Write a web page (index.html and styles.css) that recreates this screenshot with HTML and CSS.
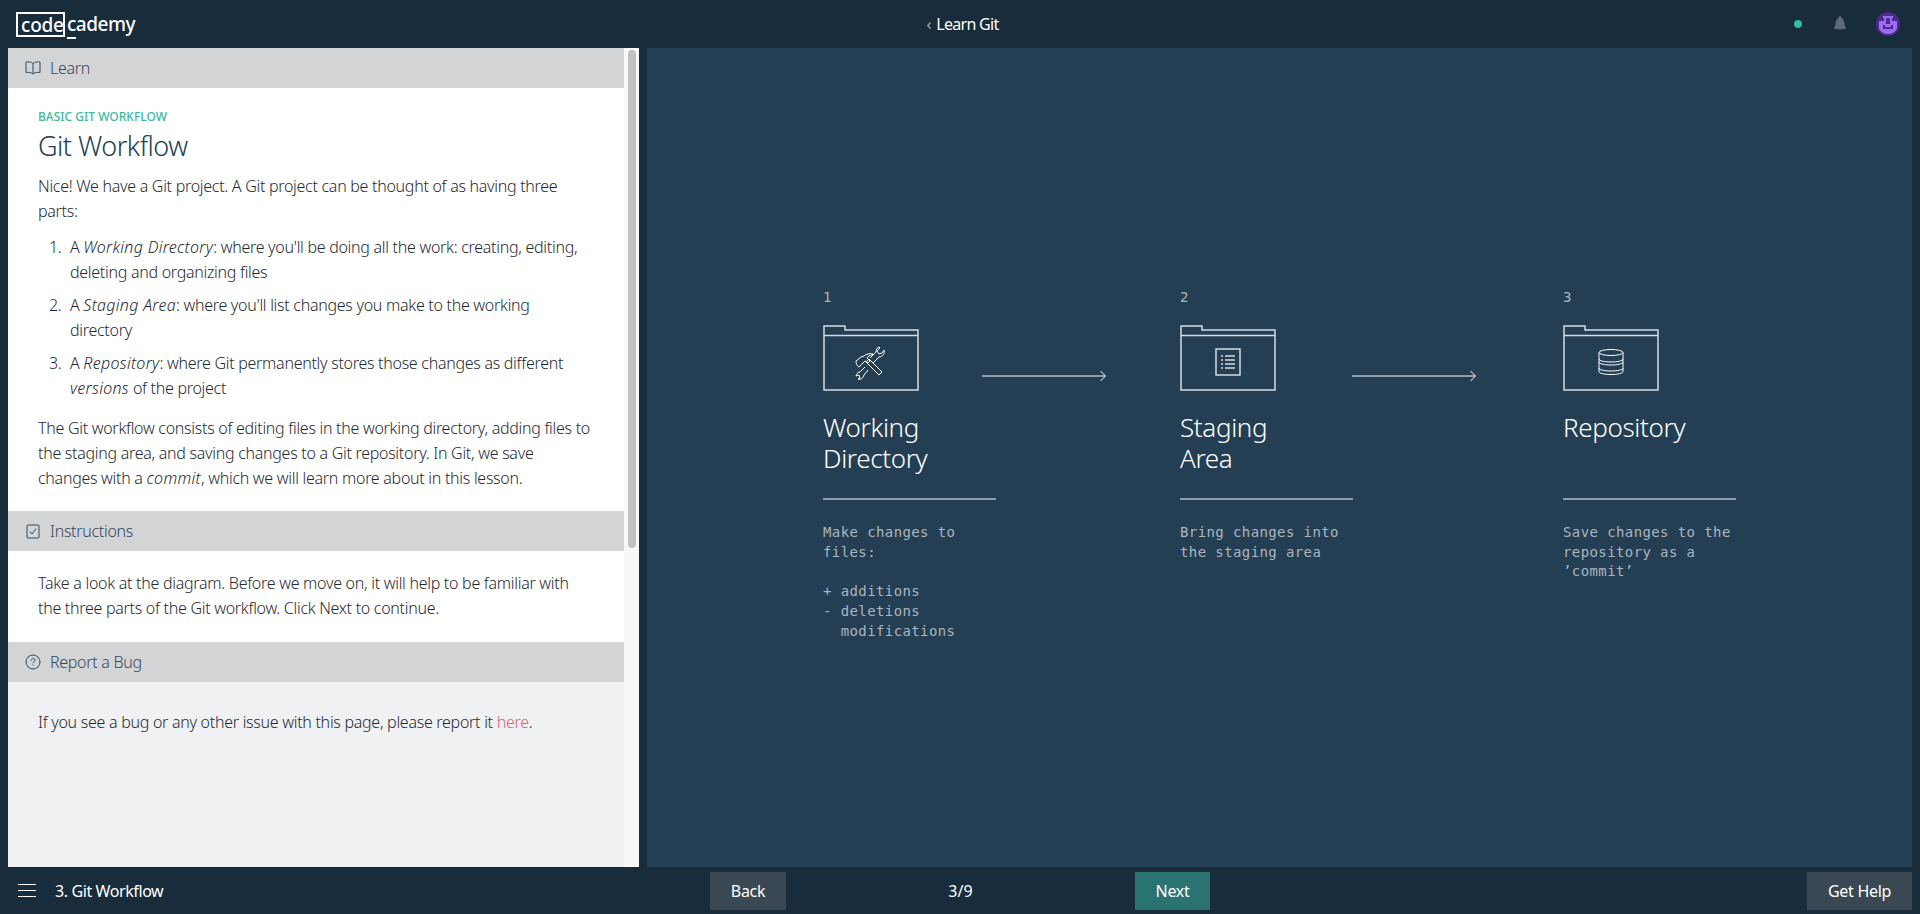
FILE: index.html
```html
<!DOCTYPE html>
<html>
<head>
  <title>Learn Git - Git Workflow</title>
  <link rel="stylesheet" href="styles.css">
</head>
<body>
  <header class="topbar">
    <div class="logo"><span class="logo-box">code</span><span class="logo-rest"><span class="logo-c">c</span>ademy</span></div>
    <div class="course-title"><span class="chevron">&#8249;</span> Learn Git</div>
    <div class="top-icons">
      <span class="status-dot"></span>
      <svg class="bell" width="20" height="20" viewBox="0 0 20 20">
        <path d="M10 2c-1 0-1.500 1-1.800 2.300C6.500 5 5.800 7 5.500 10c-.2 2-1 3.500-2 4.500 1.500 1.300 4 2 6.500 2s5-.7 6.500-2c-1-1-1.800-2.500-2-4.500-.3-3-1-5-2.700-5.700C11.500 3 11 2 10 2z" fill="#5b6b78"/>
        <path d="M4 14.800c2 1.200 10 1.200 12 0M8.500 17.200c1 .6 2 .6 3 0" fill="none" stroke="#182c3b" stroke-width="1"/>
      </svg>
      <svg class="avatar" width="24" height="24" viewBox="0 0 24 24">
        <circle cx="12" cy="12" r="12" fill="#4b2a8c"/>
        <path d="M3 9h5V6h-1V4h10v2h-1v3h5v8c-2 3-5 5-9 5s-7-2-9-5z" fill="#9a6bf0"/>
        <path d="M10 6h4v6h-4zM7 13h2v2h6v-2h2v4H7z" fill="#4b2a8c"/>
      </svg>
    </div>
  </header>

  <main class="workspace">
    <section class="lesson">
      <div class="lesson-body">
        <div class="section-head">
          <svg width="18" height="16" viewBox="0 0 18 16" fill="none" stroke="#33485a" stroke-width="1">
            <path d="M9 3.500C7.500 2 4 1.500 2 2v10.500c2-.5 5.500 0 7 1.500 1.500-1.500 5-2 7-1.500V2c-2-.5-5.500 0-7 1.500zM9 3.500V14"/>
          </svg>
          Learn
        </div>
        <div class="section-text learn-text">
          <div class="kicker">BASIC GIT WORKFLOW</div>
          <h1>Git Workflow</h1>
          <p>Nice! We have a Git project. A Git project can be thought of as having three parts:</p>
          <ol>
            <li>A <em>Working Directory</em>: where you'll be doing all the work: creating, editing, deleting and organizing files</li>
            <li>A <em>Staging Area</em>: where you'll list changes you make to the working directory</li>
            <li>A <em>Repository</em>: where Git permanently stores those changes as different <em>versions</em> of the project</li>
          </ol>
          <p>The Git workflow consists of editing files in the working directory, adding files to the staging area, and saving changes to a Git repository. In Git, we save changes with a <em>commit</em>, which we will learn more about in this lesson.</p>
        </div>
        <div class="section-head">
          <svg width="18" height="16" viewBox="0 0 18 16" fill="none" stroke="#33485a" stroke-width="1">
            <rect x="3" y="2" width="12" height="13" rx="1"/>
            <path d="M6 8.500l2 2.500 4-5.500"/>
          </svg>
          Instructions
        </div>
        <div class="section-text instructions-text">
          <p>Take a look at the diagram. Before we move on, it will help to be familiar with the three parts of the Git workflow. Click Next to continue.</p>
        </div>
        <div class="section-head">
          <svg width="18" height="16" viewBox="0 0 18 16" fill="none" stroke="#33485a" stroke-width="1">
            <circle cx="9" cy="8" r="7"/>
            <path d="M7.200 6.500c0-2.500 3.800-2.500 3.800-.3 0 1.500-2 1.500-2 3M9 10.500v1"/>
          </svg>
          Report a Bug
        </div>
        <div class="section-text bug-text">
          <p>If you see a bug or any other issue with this page, please report it <a href="#">here</a>.</p>
        </div>
      </div>
      <div class="scroll-track"><div class="scroll-thumb"></div></div>
    </section>

    <section class="diagram">
      <div class="steps">
        <div class="step">
          <div class="step-num">1</div>
          <svg class="folder" width="96" height="66" viewBox="0 0 96 66" fill="none">
            <path class="folder-line" d="M1 1h21v4h73v60H1zM1 10.500h94"/>
            <g stroke="#fff" stroke-width="1" stroke-linejoin="round">
              <path d="M33 36l5-4 3-1c2-2 6-3 9-2l-1 1c-2 0-4 1-5 3l3 3-2 2-3-2-6 6c-1 0-3-3-3-6z"/>
              <path d="M43 37l13 13 3-3-13-13zM47 33l6-6c0-2 1-5 3-5l1 1-3 3 2 3 3-1 2-3c1 3-1 7-5 7l-6 6M42 42l-5 5c-3 0-3 2-4 4l3-1 1 3-2 1c3 1 5-1 6-4l4-5"/>
            </g>
          </svg>
          <h2>Working<br>Directory</h2>
          <pre class="step-note">Make changes to
files:

+ additions
- deletions
  modifications</pre>
          <svg class="arrow" width="125" height="12" viewBox="0 0 125 12" fill="none" stroke="#fff" stroke-width="1"><path d="M0 6h123M118.500 1l5 5-5 5"/></svg>
        </div>
        <div class="step">
          <div class="step-num">2</div>
          <svg class="folder" width="96" height="66" viewBox="0 0 96 66" fill="none">
            <path class="folder-line" d="M1 1h21v4h73v60H1zM1 10.500h94"/>
            <rect x="36" y="24" width="24" height="26" stroke="#d5dbe0" stroke-width="1.500"/>
            <path d="M41 31h2M45 31h10M41 35h2M45 35h10M41 39h2M45 39h10M41 43h2M45 43h10" stroke="#d5dbe0" stroke-width="1.500"/>
          </svg>
          <h2>Staging<br>Area</h2>
          <pre class="step-note">Bring changes into
the staging area</pre>
          <svg class="arrow arrow-second" width="125" height="12" viewBox="0 0 125 12" fill="none" stroke="#fff" stroke-width="1"><path d="M0 6h123M118.500 1l5 5-5 5"/></svg>
        </div>
        <div class="step">
          <div class="step-num">3</div>
          <svg class="folder" width="96" height="66" viewBox="0 0 96 66" fill="none">
            <path class="folder-line" d="M1 1h21v4h73v60H1zM1 10.500h94"/>
            <g stroke="#fff" stroke-width="1">
              <ellipse cx="48" cy="27.500" rx="12" ry="3"/>
              <path d="M36 27.500v19c0 4 24 4 24 0v-19M36 34c0 4 24 4 24 0M36 37c0 4 24 4 24 0M36 43c0 4 24 4 24 0"/>
            </g>
          </svg>
          <h2>Repository<br>&nbsp;</h2>
          <pre class="step-note">Save changes to the
repository as a
&#8217;commit&#8217;</pre>
        </div>
      </div>
    </section>
  </main>

  <footer class="bottombar">
    <div class="lesson-name">
      <div class="burger"><span></span><span></span><span></span></div>
      3. Git Workflow
    </div>
    <div class="pager">
      <button class="btn btn-back">Back</button>
      <span class="count">3/9</span>
      <button class="btn btn-next">Next</button>
    </div>
    <button class="btn btn-help">Get Help</button>
  </footer>
</body>
</html>
```

FILE: styles.css
```css
html, body {
  height: 100%;
}

body {
  margin: 0;
  height: 914px;
  overflow: hidden;
  display: flex;
  flex-direction: column;
  background-color: #182c3b;
  font-family: "Noto Sans", sans-serif;
  font-weight: 300;
  font-size: 16px;
  color: #1f2a33;
}

/* Top bar */
.topbar {
  height: 48px;
  flex: none;
  display: grid;
  grid-template-columns: 1fr auto 1fr;
  align-items: center;
  color: #ffffff;
}

.logo {
  display: flex;
  align-items: center;
  padding-left: 16px;
  font-size: 19px;
  font-weight: 500;
}

.logo-box {
  border: 2px solid #ffffff;
  height: 25px;
  line-height: 22px;
  padding: 0 3px;
  box-sizing: border-box;
  width: 49px;
  letter-spacing: -0.2px;
}

.logo-rest {
  margin-left: 2px;
  letter-spacing: -0.5px;
}

.logo-c {
  border-bottom: 2px solid #ffffff;
}

.course-title {
  padding-left: 5px;
  font-size: 16px;
  font-weight: 400;
  letter-spacing: -0.7px;
}

.chevron {
  color: #aab4bc;
  margin-right: 2px;
}

.top-icons {
  display: flex;
  justify-content: flex-end;
  align-items: center;
  padding-right: 20px;
}

.status-dot {
  width: 8px;
  height: 8px;
  border-radius: 50%;
  background-color: #2fbd9b;
}

.bell {
  margin-left: 28px;
}

.avatar {
  margin-left: 26px;
}

/* Main area */
.workspace {
  flex: 1;
  min-height: 0;
  display: flex;
  padding: 0 8px;
  gap: 8px;
}

.lesson {
  width: 631px;
  flex: none;
  display: flex;
  background-color: #f0f1f3;
}

.lesson-body {
  flex: 1;
  min-width: 0;
}

.section-head {
  height: 40px;
  display: flex;
  align-items: center;
  gap: 8px;
  padding: 0 16px;
  background-color: #d3d4d6;
  color: #33485a;
  font-size: 16px;
  letter-spacing: -0.3px;
}

.section-text {
  padding: 0 30px;
  line-height: 25px;
  letter-spacing: -0.28px;
}

.section-text p {
  margin: 0;
}

.section-text em {
  letter-spacing: 0.3px;
}

.learn-text {
  background-color: #ffffff;
  padding-top: 21px;
  padding-bottom: 20px;
}

.instructions-text {
  background-color: #ffffff;
  padding-top: 20px;
  padding-bottom: 20px;
  height: 91px;
  box-sizing: border-box;
}

.bug-text {
  padding-top: 28px;
}

.bug-text a {
  color: #e85d6f;
  text-decoration: none;
}

.kicker {
  font-size: 12px;
  font-weight: 500;
  line-height: 16px;
  letter-spacing: 0;
  color: #3fb8a0;
}

h1 {
  margin: 2px 0 9px;
  font-size: 27px;
  font-weight: 300;
  line-height: 38px;
  letter-spacing: -0.5px;
  color: #204056;
}

ol {
  margin: 11px 0 15px;
  padding-left: 32px;
  list-style: none;
  counter-reset: step;
}

li {
  margin-bottom: 8px;
  counter-increment: step;
}

li::before {
  content: counter(step) ".";
  display: inline-block;
  width: 21px;
  margin-left: -21px;
}

.scroll-track {
  width: 15px;
  flex: none;
  background-color: #f8f8f8;
  padding: 2px 3px 0 4px;
  box-sizing: border-box;
}

.scroll-thumb {
  height: 498px;
  background-color: #c1c1c1;
  border-radius: 4px;
}

/* Diagram */
.diagram {
  flex: 1;
  min-width: 0;
  background-color: #243f54;
  padding: 241px 0 0 176px;
  box-sizing: border-box;
}

.steps {
  display: grid;
  grid-template-columns: 357px 383px 173px;
}

.step {
  position: relative;
  width: 173px;
}

.step-num {
  font-family: "DejaVu Sans Mono", monospace;
  font-size: 14px;
  line-height: 16px;
  color: #a9b5be;
}

.folder {
  display: block;
  margin-top: 20px;
}

.folder-line {
  stroke: #d5dbe0;
  stroke-width: 1.500;
}

h2 {
  margin: 21px 0 0;
  padding-bottom: 24px;
  border-bottom: 2px solid #8f9daa;
  font-size: 26px;
  font-weight: 300;
  line-height: 31px;
  letter-spacing: -0.35px;
  color: #ffffff;
}

.step-note {
  margin: 23px 0 0;
  font-family: "DejaVu Sans Mono", monospace;
  font-size: 14px;
  letter-spacing: 0.4px;
  line-height: 19.700px;
  color: #aab5be;
}

.arrow {
  position: absolute;
  left: 159px;
  top: 81px;
}

.arrow-second {
  left: 172px;
}

/* Bottom bar */
.bottombar {
  height: 47px;
  flex: none;
  display: grid;
  grid-template-columns: 1fr auto 1fr;
  align-items: center;
  color: #ffffff;
  padding: 0 8px;
}

.lesson-name {
  display: flex;
  align-items: center;
  gap: 19px;
  padding-left: 10px;
  font-weight: 400;
  letter-spacing: -0.4px;
}

.burger {
  width: 18px;
}

.burger span {
  display: block;
  height: 1px;
  background-color: #ffffff;
  margin-bottom: 5px;
}

.burger span:last-child {
  margin-bottom: 0;
}

.pager {
  display: flex;
  align-items: center;
}

.count {
  width: 349px;
  text-align: center;
  font-weight: 400;
}

.btn {
  height: 38px;
  border: 0;
  color: #ffffff;
  font-family: inherit;
  font-size: 16px;
  font-weight: 400;
  letter-spacing: -0.3px;
  background-color: #3a4854;
}

.btn-back {
  width: 76px;
}

.btn-next {
  width: 75px;
  background-color: #2a7370;
}

.btn-help {
  width: 105px;
  justify-self: end;
}
```
